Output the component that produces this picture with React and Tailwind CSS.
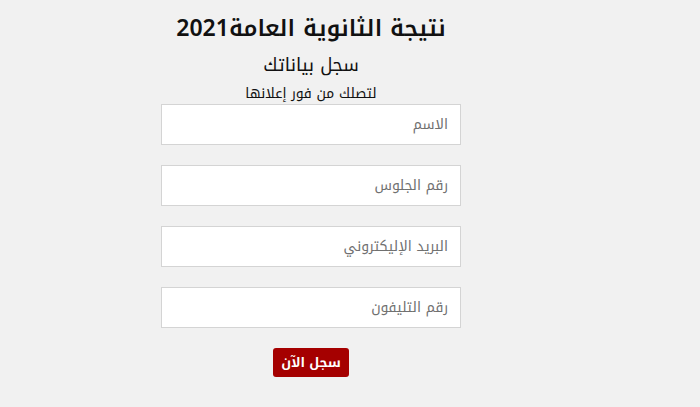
const fields = ["الاسم", "رقم الجلوس", "البريد الإليكتروني", "رقم التليفون"];

export default function App() {
  return (
    <div
      dir="rtl"
      className="min-h-[407px] w-full bg-[#f1f1f1] text-[#111]"
      style={{ fontFamily: '"Noto Kufi Arabic", "Noto Sans Arabic", "Noto Sans", "DejaVu Sans", sans-serif' }}
    >
      <div className="mr-[239px] flex w-[300px] flex-col items-center pt-[10px]">
        <h1 className="text-[23px] font-semibold leading-[38px]">نتيجة الثانوية العامة2021</h1>
        <h2 className="mt-[5px] text-[18px] leading-[24px]">سجل بياناتك</h2>
        <p className="mt-[7px] text-[14px] leading-[20px]">لتصلك من فور إعلانها</p>

        <form className="flex w-full flex-col gap-[20px]">
          {fields.map((f) => (
            <input
              key={f}
              type="text"
              placeholder={f}
              className="h-[41px] w-full border border-[#d4d4d4] bg-white px-[12px] text-[14px] outline-none placeholder:text-[#707070]"
            />
          ))}
          <div className="flex justify-center">
            <button
              type="button"
              className="h-[29px] w-[76px] rounded-[3px] bg-[#a50000] text-[13px] font-bold text-white"
            >
              سجل الآن
            </button>
          </div>
        </form>
      </div>
    </div>
  );
}
